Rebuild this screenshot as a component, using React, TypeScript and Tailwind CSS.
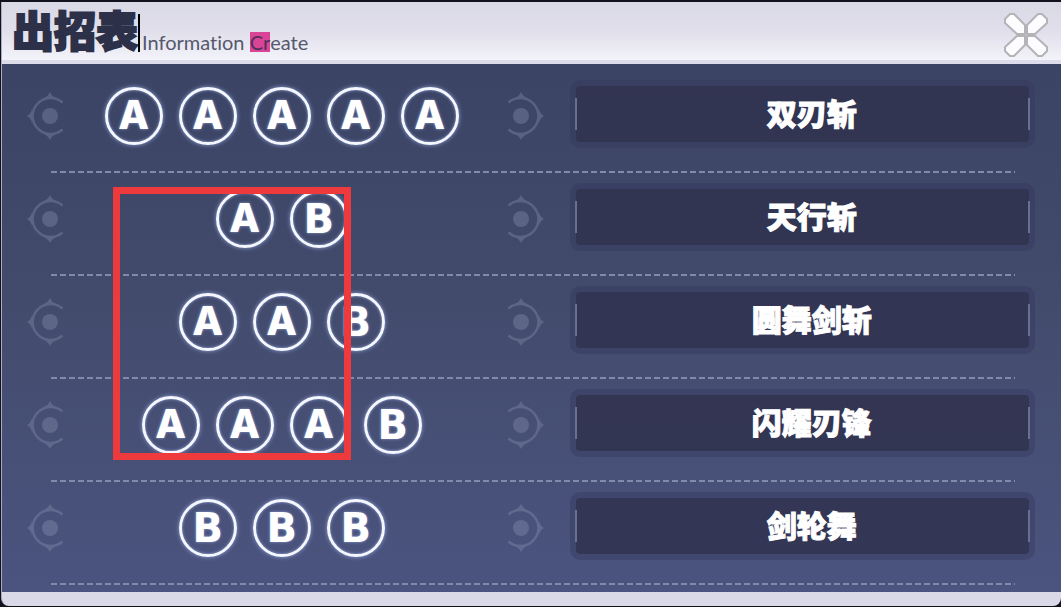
type Key = "A" | "B";

type Move = {
  name: string;
  keys: Key[];
};

const moves: Move[] = [
  { name: "双刃斩", keys: ["A", "A", "A", "A", "A"] },
  { name: "天行斩", keys: ["A", "B"] },
  { name: "圆舞剑斩", keys: ["A", "A", "B"] },
  { name: "闪耀刃锋", keys: ["A", "A", "A", "B"] },
  { name: "剑轮舞", keys: ["B", "B", "B"] },
];

function Ornament({ flipped = false }: { flipped?: boolean }) {
  return (
    <svg
      viewBox="0 0 37 50"
      aria-hidden="true"
      className={flipped ? "h-[50px] w-[37px] shrink-0 -scale-x-100 opacity-30" : "h-[50px] w-[37px] shrink-0 opacity-30"}
    >
      <circle cx="23" cy="25" r="8" fill="#98a2c0" />
      <path d="M35.5 11.5A18 18 0 1 0 35.5 38.5" fill="none" stroke="#98a2c0" strokeWidth="2.5" />
      <path d="M16 7.5Q21 5.5 23 1Q25 5.5 30 7.5Z M16 42.5Q21 44.5 23 49Q25 44.5 30 42.5Z M5 18Q4 23 0 25Q4 27 5 32Z" fill="#98a2c0" />
    </svg>
  );
}

function KeyBadge({ label }: { label: Key }) {
  return (
    <li className="flex size-[58px] items-center justify-center rounded-full border-[3px] border-[#f4f7ff] text-white shadow-[0_0_4px_#8fa3d8,inset_0_0_3px_#8fa3d8]">
      {label === "A" ? (
        <span className="pb-0.5 font-['Inter','Liberation_Sans',sans-serif] text-[40px] leading-none font-extrabold [text-shadow:0_0_3px_#8fa3d8]">A</span>
      ) : (
        <span className="font-['DejaVu_Sans','Liberation_Sans',sans-serif] text-[40px] leading-none font-bold [text-shadow:0_0_3px_#8fa3d8]">B</span>
      )}
    </li>
  );
}

function MoveRow({ move }: { move: Move }) {
  return (
    <li>
      <div className="grid grid-cols-[minmax(0,518fr)_minmax(0,465fr)] items-center gap-[26px] pt-2.5 pr-[26px] pb-[23px] pl-[25px]">
        <div className="flex items-center justify-between pt-1">
          <Ornament />
          <ul className="flex gap-4 pr-2">
            {move.keys.map((key, i) => (
              <KeyBadge key={i} label={key} />
            ))}
          </ul>
          <Ornament flipped />
        </div>
        <div className="flex h-[68px] items-center justify-between rounded-[10px] border-[6px] border-[#32345a]/35 bg-[#313350]/90 bg-clip-padding">
          <span className="-ml-px h-8 w-0.5 bg-[#67708f]" />
          <h2 className="pb-1 pl-[18px] font-['Noto_Sans_CJK_SC',sans-serif] text-[30px] leading-none font-black text-white [-webkit-text-stroke:1px_white]">
            {move.name}
          </h2>
          <span className="-mr-px h-8 w-0.5 bg-[#67708f]" />
        </div>
      </div>
      <div className="mr-[46px] ml-[49px] h-0.5 bg-[repeating-linear-gradient(90deg,#818aab_0px,#818aab_6px,transparent_6px,transparent_9px)]" />
    </li>
  );
}

export default function App() {
  return (
    <div className="min-h-screen bg-[#11121c] pt-0.5 pl-px">
      <main className="rounded-b-lg border-l border-[#a9adc2] bg-[#dad9e7]">
        <header className="flex h-[62px] items-start justify-between border-b-4 border-[#dddcea] bg-linear-to-b from-[#d9d8e5] via-[#e0dfeb] to-[#f3f3fa] pr-3 pl-2.5">
          <div className="flex items-start">
            <h1 className="font-['Noto_Sans_CJK_SC',sans-serif] text-[42px] leading-[54px] font-black whitespace-nowrap text-[#2c3049] [-webkit-text-stroke:2px_#2c3049]">
              出招表
            </h1>
            <span className="mt-3 h-[38px] w-0.5 bg-black" />
            <p className="mt-[30px] ml-0.5 font-['Lato',sans-serif] text-xl leading-5 whitespace-nowrap text-[#55586d] [font-variant-ligatures:none]">
              Information <mark className="inline-block bg-[#db4496] text-[#4b3159]">Cr</mark>eate
            </p>
          </div>
          <button type="button" aria-label="Close" className="mt-2.5 cursor-pointer">
            <svg viewBox="0 0 46 46" className="size-[46px]" fill="#fdfdff" stroke="#b3b3b8" strokeWidth="2" strokeLinejoin="round">
              <path d="M2 7L7 2H11L22 13V22H14L2 11Z" />
              <path d="M44 7L39 2H35L24 13V22H32L44 11Z" />
              <path d="M2 39L7 44H11L22 33V24H14L2 35Z" />
              <path d="M44 39L39 44H35L24 33V24H32L44 35Z" />
            </svg>
          </button>
        </header>
        <section className="relative bg-linear-to-b from-[#3b4465] via-[#434b6d] via-45% to-[#4b547f] pt-1.5 pb-[7px]">
          <ul>
            {moves.map((move) => (
              <MoveRow key={move.name} move={move} />
            ))}
          </ul>
          <div className="pointer-events-none absolute top-[123px] left-[111px] h-[273px] w-[238px] border-[7px] border-[#ee393d]" />
        </section>
        <footer className="h-3.5" />
      </main>
    </div>
  );
}
